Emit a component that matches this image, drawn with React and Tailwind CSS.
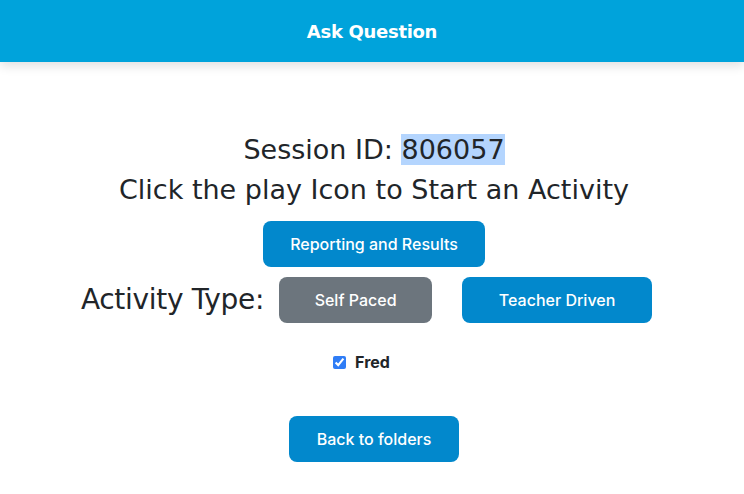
export default function App() {
  return (
    <div className="min-h-[494px] bg-white text-[#212529]">
      <header className="h-[62px] bg-[#00a3db] flex items-center justify-center shadow-[0_4px_10px_rgba(0,0,0,0.12)]">
        <h1 className="text-white text-[18px] font-semibold font-['DejaVu_Sans',sans-serif] tracking-[-0.3px]">
          Ask Question
        </h1>
      </header>

      <main className="flex flex-col items-center pt-[71px] pl-[4px] font-['DejaVu_Sans',sans-serif]">
        <div className="text-[27px] leading-[34px]">
          Session ID: <span className="bg-[#b4d5fe]">806057</span>
        </div>
        <div className="text-[27px] leading-[34px] mt-[6px]">
          Click the play Icon to Start an Activity
        </div>

        <button className="mt-[14px] w-[222px] h-[46px] rounded-lg bg-[#0288cc] text-white text-[16px] font-medium font-['Inter',sans-serif]">
          Reporting and Results
        </button>

        <div className="mt-[10px] flex items-center ml-[-15px]">
          <span className="text-[28px] mr-[15px] tracking-[-0.3px]">Activity Type:</span>
          <button className="w-[153px] h-[46px] rounded-lg bg-[#6c757d] text-white text-[16px] font-medium font-['Inter',sans-serif]">
            Self Paced
          </button>
          <button className="ml-[30px] w-[190px] h-[46px] rounded-lg bg-[#0288cc] text-white text-[16px] font-medium font-['Inter',sans-serif]">
            Teacher Driven
          </button>
        </div>

        <label className="mt-[27px] mr-[25px] flex items-center gap-[9px] text-[16px] font-bold font-['Inter',sans-serif]">
          <input type="checkbox" defaultChecked className="w-[13px] h-[13px] accent-[#2f7df6]" />
          Fred
        </label>

        <button className="mt-[42px] w-[170px] h-[46px] rounded-lg bg-[#0288cc] text-white text-[16px] font-medium font-['Inter',sans-serif]">
          Back to folders
        </button>
      </main>
    </div>
  );
}
